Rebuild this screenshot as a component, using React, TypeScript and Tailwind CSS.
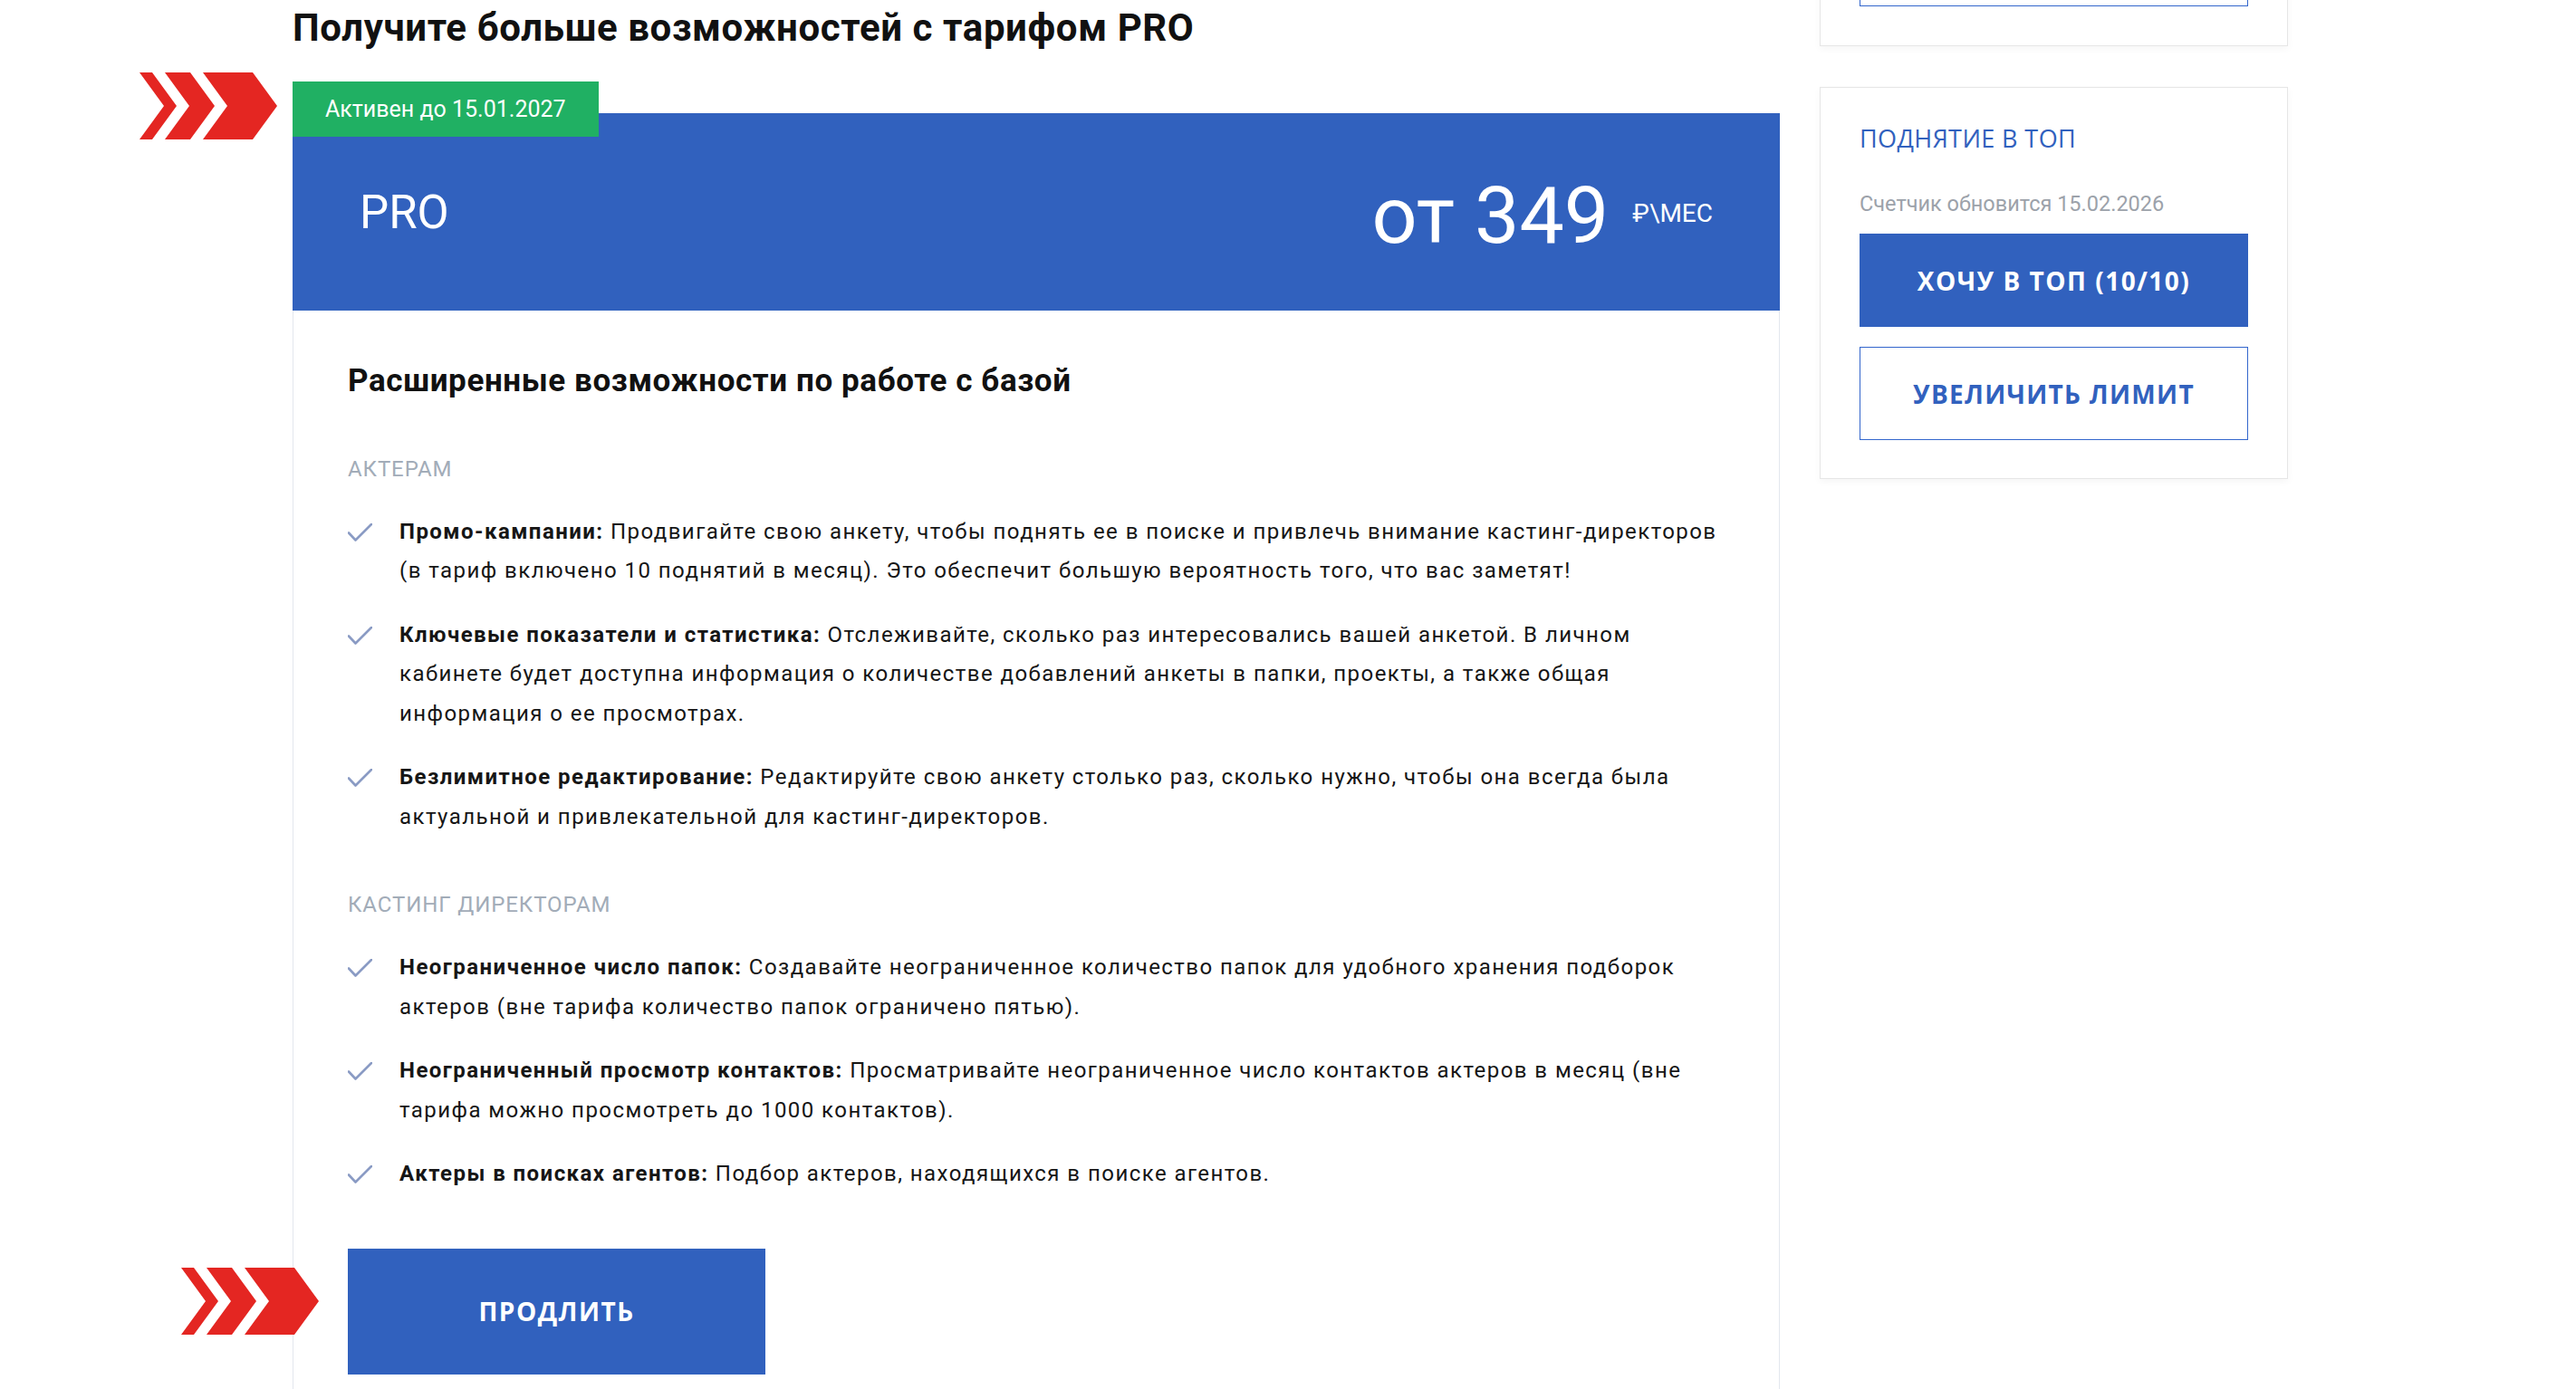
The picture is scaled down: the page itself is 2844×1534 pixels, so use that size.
import React from 'react';

interface Feature {
  title: string;
  text: string;
}

interface Section {
  label: string;
  items: Feature[];
}

const sections: Section[] = [
  {
    label: 'АКТЕРАМ',
    items: [
      {
        title: 'Промо-кампании:',
        text: 'Продвигайте свою анкету, чтобы поднять ее в поиске и привлечь внимание кастинг-директоров (в тариф включено 10 поднятий в месяц). Это обеспечит большую вероятность того, что вас заметят!',
      },
      {
        title: 'Ключевые показатели и статистика:',
        text: 'Отслеживайте, сколько раз интересовались вашей анкетой. В личном кабинете будет доступна информация о количестве добавлений анкеты в папки, проекты, а также общая информация о ее просмотрах.',
      },
      {
        title: 'Безлимитное редактирование:',
        text: 'Редактируйте свою анкету столько раз, сколько нужно, чтобы она всегда была актуальной и привлекательной для кастинг-директоров.',
      },
    ],
  },
  {
    label: 'КАСТИНГ ДИРЕКТОРАМ',
    items: [
      {
        title: 'Неограниченное число папок:',
        text: 'Создавайте неограниченное количество папок для удобного хранения подборок актеров (вне тарифа количество папок ограничено пятью).',
      },
      {
        title: 'Неограниченный просмотр контактов:',
        text: 'Просматривайте неограниченное число контактов актеров в месяц (вне тарифа можно просмотреть до 1000 контактов).',
      },
      {
        title: 'Актеры в поисках агентов:',
        text: 'Подбор актеров, находящихся в поиске агентов.',
      },
    ],
  },
];

// red triple chevron used as a pointer next to the badge and the button
const Chevrons: React.FC<{ className?: string }> = ({ className }) => (
  <svg className={className} width="153" height="74" viewBox="0 0 153 74" aria-hidden="true">
    <polygon points="0,0 14,0 41,37 14,74 0,74 27,37" fill="#e42622" />
    <polygon points="28,0 56,0 83,37 56,74 28,74 55,37" fill="#e42622" />
    <polygon points="70,0 125,0 152,37 125,74 70,74 97,37" fill="#e42622" />
  </svg>
);

const Check = () => (
  <svg width="27" height="20" viewBox="0 0 27 20" fill="none" aria-hidden="true">
    <path d="M1 10.5 L8.5 18.5 L26 1" stroke="#8a9bc4" strokeWidth="2.6" strokeLinecap="round" strokeLinejoin="round" />
  </svg>
);

export default function App() {
  return (
    <div className="h-[1534px] overflow-hidden bg-white font-['Roboto','Liberation_Sans',sans-serif] text-[#161616]">
      <div className="flex items-start gap-[44px] pl-[323px]">
        {/* main column */}
        <main className="w-[1642px] shrink-0">
          <h1 className="mt-[6px] text-[42px] leading-[50px] font-bold tracking-[0.6px] text-[#111]">
            Получите больше возможностей с тарифом PRO
          </h1>

          <div className="relative mt-[69px] flex h-[218px] items-center justify-between bg-[#3161be] px-[74px] text-white">
            <div className="absolute left-0 top-[-35px] flex h-[61px] items-center bg-[#20b063] px-[36px] text-[25px] leading-none">
              Активен до 15.01.2027
              <Chevrons className="absolute right-[calc(100%+16px)] top-[-10px]" />
            </div>
            <span className="text-[51px] leading-none font-normal">PRO</span>
            <div className="mt-[8px] flex items-start">
              <span className="text-[88px] leading-none font-normal">от 349</span>
              <span className="ml-[26px] mt-[28px] text-[28px] leading-none">₽\МЕС</span>
            </div>
          </div>

          <div className="border border-t-0 border-[#e3e7ee] px-[60px] pt-[57px] pb-[80px]">
            <h2 className="text-[35px] leading-[41px] font-bold tracking-[0.6px] text-[#111]">
              Расширенные возможности по работе с базой
            </h2>

            {sections.map((section, si) => (
              <section key={section.label} className={si === 0 ? 'mt-[63px]' : 'mt-[61px]'}>
                <div className="text-[24px] leading-[28.8px] tracking-[0.9px] text-[#a2acb8]">{section.label}</div>
                <ul className="mt-[33px] flex flex-col gap-[27px]">
                  {section.items.map((item) => (
                    <li key={item.title} className="flex">
                      <div className="w-[57px] shrink-0 pt-[12px]">
                        <Check />
                      </div>
                      <p className="text-[24px] leading-[43.5px] tracking-[1.45px]">
                        <b className="font-bold">{item.title}</b> {item.text}
                      </p>
                    </li>
                  ))}
                </ul>
              </section>
            ))}

            <div className="relative mt-[60px] w-[461px]">
              <Chevrons className="absolute right-[calc(100%+31px)] top-[21px]" />
              <button className="flex h-[139px] w-full items-center justify-center bg-[#3161be] font-['Open_Sans',sans-serif] text-[28px] font-bold tracking-[1.5px] text-white">
                ПРОДЛИТЬ
              </button>
            </div>
          </div>
        </main>

        {/* sidebar */}
        <aside className="flex w-[517px] shrink-0 flex-col gap-[45px]">
          <div className="-mt-[141px] border border-[#e6e6e6] bg-white px-[43px] pt-[44px] pb-[43px] shadow-[0_3px_8px_rgba(0,0,0,0.04)]">
            <button aria-label="Подробнее" className="block h-[103px] w-full border border-[#3366cc]" />
          </div>

          <div className="border border-[#e6e6e6] bg-white px-[43px] pt-[40px] pb-[42px] shadow-[0_3px_8px_rgba(0,0,0,0.04)]">
            <div className="font-['Open_Sans',sans-serif] text-[27px] leading-[32px] tracking-[0.4px] text-[#3161be]">
              ПОДНЯТИЕ В ТОП
            </div>
            <div className="mt-[42px] text-[23.5px] leading-[29px] text-[#9ca2aa]">
              Счетчик обновится 15.02.2026
            </div>
            <button className="mt-[18px] flex h-[103px] w-full items-center justify-center bg-[#3161be] font-['Open_Sans',sans-serif] text-[28px] font-bold tracking-[1.5px] text-white">
              ХОЧУ В ТОП (10/10)
            </button>
            <button className="mt-[22px] flex h-[103px] w-full items-center justify-center border border-[#3366cc] font-['Open_Sans',sans-serif] text-[28px] font-bold tracking-[1.3px] text-[#3161be]">
              УВЕЛИЧИТЬ ЛИМИТ
            </button>
          </div>
        </aside>
      </div>
    </div>
  );
}
